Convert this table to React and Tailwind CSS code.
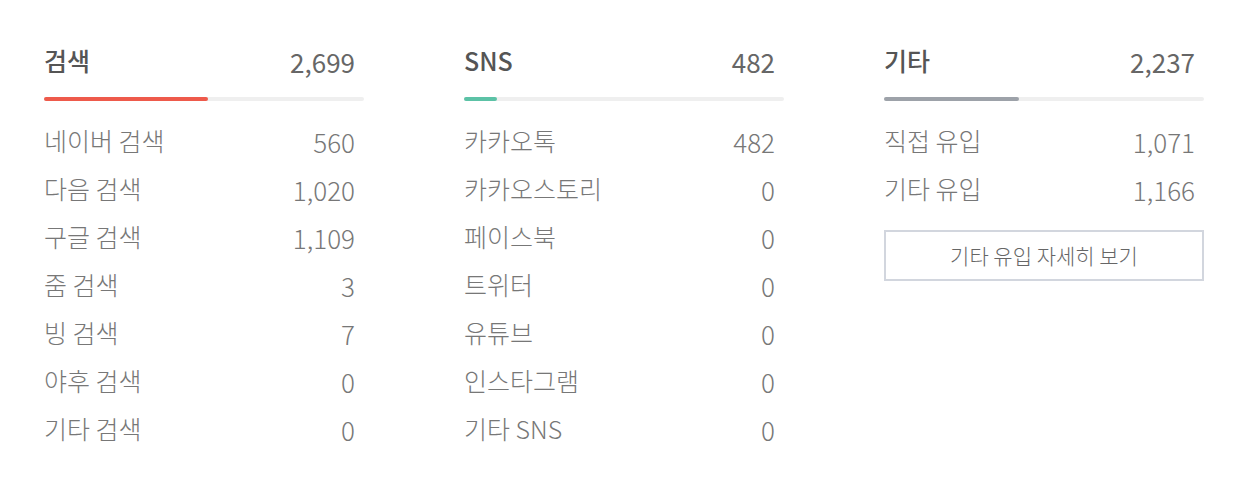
import React from "react";

const font = { fontFamily: '"Noto Sans CJK KR", "Noto Sans", sans-serif' };

const columns = [
  {
    title: "검색",
    total: "2,699",
    barClass: "bg-[#ee5a4b]",
    barWidth: "w-[164px]",
    rows: [
      ["네이버 검색", "560"],
      ["다음 검색", "1,020"],
      ["구글 검색", "1,109"],
      ["줌 검색", "3"],
      ["빙 검색", "7"],
      ["야후 검색", "0"],
      ["기타 검색", "0"],
    ],
  },
  {
    title: "SNS",
    total: "482",
    barClass: "bg-[#5cc2a6]",
    barWidth: "w-[33px]",
    rows: [
      ["카카오톡", "482"],
      ["카카오스토리", "0"],
      ["페이스북", "0"],
      ["트위터", "0"],
      ["유튜브", "0"],
      ["인스타그램", "0"],
      ["기타 SNS", "0"],
    ],
  },
  {
    title: "기타",
    total: "2,237",
    barClass: "bg-[#9da2a9]",
    barWidth: "w-[135px]",
    rows: [
      ["직접 유입", "1,071"],
      ["기타 유입", "1,166"],
    ],
    button: "기타 유입 자세히 보기",
  },
];

function Column({ col }) {
  return (
    <div className="w-[320px] flex flex-col">
      <div className="flex items-center justify-between h-[42px] pr-[9px]">
        <span className="text-[25px] font-medium text-[#555]">{col.title}</span>
        <span className="text-[26px] font-normal text-[#666]">{col.total}</span>
      </div>
      <div className="mt-[15px] h-[4px] w-full rounded-full bg-[#efefef] flex">
        <div className={`h-full rounded-full ${col.barClass} ${col.barWidth}`} />
      </div>
      <div className="mt-[16px] flex flex-col">
        {col.rows.map(([label, value]) => (
          <div key={label} className="flex items-center justify-between h-[48px] pr-[9px] text-[25px] font-light text-[#777]">
            <span>{label}</span>
            <span className="text-[26px]">{value}</span>
          </div>
        ))}
      </div>
      {col.button && (
        <div className="mt-[17px] h-[51px] border-2 border-[#d2d6de] flex items-center justify-center text-[21px] font-light text-[#666]">
          {col.button}
        </div>
      )}
    </div>
  );
}

export default function App() {
  return (
    <div style={font} className="w-[1254px] h-[490px] bg-white pt-[40px] pl-[44px] flex gap-[100px]">
      {columns.map((c) => (
        <Column key={c.title} col={c} />
      ))}
    </div>
  );
}
